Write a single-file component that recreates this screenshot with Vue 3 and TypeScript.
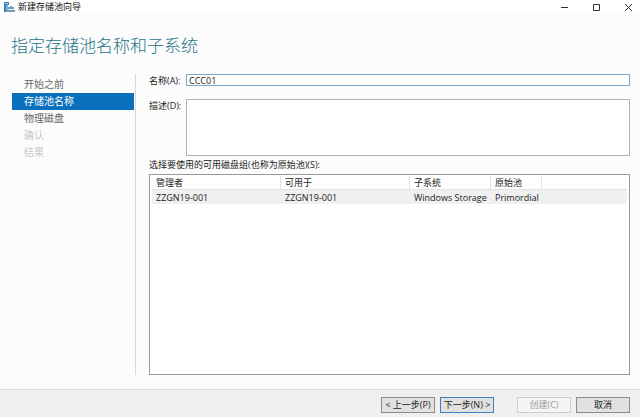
<script setup lang="ts">
import { ref } from 'vue'

interface Step {
  label: string
  state: 'open' | 'current' | 'locked'
}

interface Pool {
  manager: string
  availableTo: string
  subsystem: string
  primordial: string
}

const steps: Step[] = [
  { label: '开始之前', state: 'open' },
  { label: '存储池名称', state: 'current' },
  { label: '物理磁盘', state: 'open' },
  { label: '确认', state: 'locked' },
  { label: '结果', state: 'locked' },
]

const columns: string[] = ['管理者', '可用于', '子系统', '原始池']

const pools: Pool[] = [
  {
    manager: 'ZZGN19-001',
    availableTo: 'ZZGN19-001',
    subsystem: 'Windows Storage',
    primordial: 'Primordial',
  },
]

const poolName = ref('CCC01')
const description = ref('')
</script>

<template>
  <div class="wizard">
    <header class="titlebar">
      <svg class="app-icon" viewBox="0 0 12 12" aria-hidden="true">
        <path d="M1 1h5v3H3v7H1z" fill="#2f83b8" />
        <path d="M2 2h3v1H2z" fill="#a9d2ea" />
        <path d="M3 4h2v7H3z" fill="#7db4d6" />
        <path d="M6 6h1V5h2v1h2v2H5V6z" fill="#6d9fbe" />
        <path d="M5 8h6v1H5z" fill="#e4eff5" />
        <path d="M3 9h9v2H3z" fill="#7f9cae" />
      </svg>
      <span class="caption">新建存储池向导</span>
      <div class="window-controls">
        <button type="button" aria-label="最小化">
          <svg viewBox="0 0 9 9"><path d="M1 4.5h7" /></svg>
        </button>
        <button type="button" aria-label="最大化">
          <svg viewBox="0 0 9 9"><path d="M1.5 1.5h6v6h-6z" /></svg>
        </button>
        <button type="button" aria-label="关闭">
          <svg viewBox="0 0 9 9"><path d="M1 1l7 7M8 1L1 8" /></svg>
        </button>
      </div>
    </header>

    <h1>指定存储池名称和子系统</h1>

    <div class="body">
      <nav class="steps">
        <a
          v-for="step in steps"
          :key="step.label"
          href="#"
          :class="step.state"
          :aria-current="step.state === 'current' ? 'step' : undefined"
          @click.prevent
          >{{ step.label }}</a
        >
      </nav>

      <main class="form">
        <div class="field">
          <label for="pool-name">名称(A):</label>
          <input id="pool-name" v-model="poolName" type="text" />
        </div>
        <div class="field description">
          <label for="pool-description">描述(D):</label>
          <textarea id="pool-description" v-model="description"></textarea>
        </div>
        <p id="pool-list-label" class="list-label">选择要使用的可用磁盘组(也称为原始池)(S):</p>
        <div class="list">
          <table aria-labelledby="pool-list-label">
            <colgroup>
              <col class="wide" />
              <col class="wide" />
              <col class="medium" />
              <col class="narrow" />
              <col />
            </colgroup>
            <thead>
              <tr>
                <th v-for="column in columns" :key="column" scope="col">{{ column }}</th>
                <td></td>
              </tr>
            </thead>
            <tbody>
              <tr v-for="pool in pools" :key="pool.manager">
                <td>{{ pool.manager }}</td>
                <td>{{ pool.availableTo }}</td>
                <td>{{ pool.subsystem }}</td>
                <td>{{ pool.primordial }}</td>
                <td></td>
              </tr>
            </tbody>
          </table>
        </div>
      </main>
    </div>

    <footer class="actions">
      <button type="button">&lt; 上一步(P)</button>
      <button type="button" class="primary">下一步(N) &gt;</button>
      <button type="button" class="create" disabled>创建(C)</button>
      <button type="button">取消</button>
    </footer>
  </div>
</template>

<style>
body {
  margin: 0;
}
</style>

<style scoped>
.wizard {
  display: flex;
  flex-direction: column;
  min-height: 100vh;
  background: #fcfcfc;
  color: #222;
  font: 9px/12px 'Open Sans', 'Noto Sans CJK SC', sans-serif;
}

.wizard * {
  box-sizing: border-box;
}

button,
input,
textarea {
  font: inherit;
  color: inherit;
}

.titlebar {
  display: flex;
  align-items: center;
  height: 14px;
  padding-left: 3px;
  background: #fff;
}

.app-icon {
  width: 12px;
  height: 12px;
}

.caption {
  margin-left: 3px;
  color: #111;
}

.window-controls {
  display: flex;
  gap: 8px;
  margin-left: auto;
}

.window-controls button {
  display: flex;
  align-items: center;
  justify-content: center;
  width: 24px;
  height: 14px;
  padding: 0;
  border: 0;
  background: none;
}

.window-controls svg {
  width: 9px;
  height: 9px;
  fill: none;
  stroke: #333;
}

h1 {
  margin: 20px 0 16px 11px;
  color: #1f7488;
  font-size: 17px;
  font-weight: 300;
  line-height: 24px;
}

.body {
  display: flex;
  flex: 1;
  padding: 0 10px 14px 12px;
}

.steps {
  display: flex;
  flex-direction: column;
  width: 124px;
  flex: none;
  padding: 2px 1px 0 0;
  border-right: 1px solid #d8d8d8;
}

.steps a {
  padding-left: 12px;
  color: #666;
  font-size: 10px;
  line-height: 17px;
  text-decoration: none;
}

.steps .current {
  background: #0a70bc;
  color: #fff;
}

.steps .locked {
  color: #c8c8c8;
}

.form {
  display: flex;
  flex: 1;
  flex-direction: column;
  min-width: 0;
  padding-left: 13px;
}

.field {
  display: flex;
}

.field label {
  flex: none;
  width: 37px;
  padding-top: 1px;
  white-space: nowrap;
}

.field input,
.field textarea {
  flex: 1;
  min-width: 0;
  margin: 0;
  padding: 0 2px;
  border: 1px solid #b4b4b4;
  border-radius: 0;
  outline: 0;
  background: #fff;
}

.field input {
  height: 12px;
  border-color: #7fa9c9;
  line-height: 10px;
}

.field textarea {
  height: 57px;
  resize: none;
}

.description {
  margin-top: 12px;
}

.list-label {
  margin: 3px 0;
}

.list {
  flex: 1;
  padding: 1px 2px;
  border: 1px solid #999;
  background: #fff;
}

table {
  width: 100%;
  table-layout: fixed;
  border-collapse: separate;
  border-spacing: 0;
}

.wide {
  width: 129px;
}

.medium {
  width: 81px;
}

.narrow {
  width: 51px;
}

th,
td {
  height: 14px;
  padding: 0 0 0 4px;
  font-weight: 400;
  line-height: 13px;
  text-align: left;
  white-space: nowrap;
}

thead th,
thead td {
  border-bottom: 1px solid #e2e2e2;
}

thead th {
  border-right: 1px solid #e2e2e2;
}

tbody td {
  background: #f0f0f0;
}

.actions {
  display: flex;
  gap: 5px;
  height: 28px;
  justify-content: flex-end;
  padding: 7px 10px 0;
  border-top: 1px solid #dedede;
  background: #efefef;
}

.actions button {
  width: 54px;
  height: 16px;
  padding: 0;
  border: 1px solid #8c8c8c;
  background: #e1e1e1;
  line-height: 14px;
  white-space: nowrap;
}

.actions .primary {
  border-color: #3c82bf;
}

.actions .create {
  margin-left: 18px;
  border-color: #cdcdcd;
  background: #f5f5f5;
  color: #999;
}
</style>
